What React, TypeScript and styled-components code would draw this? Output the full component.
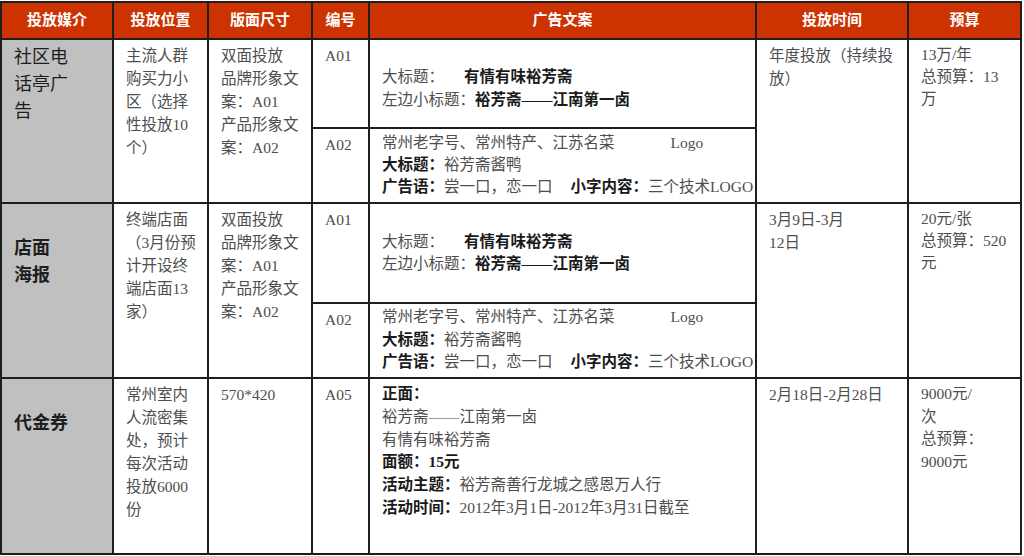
import React from 'react'
import styled, { createGlobalStyle } from 'styled-components'

const GlobalStyle = createGlobalStyle`
  html, body {
    margin: 0;
    padding: 0;
    background: #ffffff;
  }
  body {
    font-family: "Liberation Serif", "Noto Sans CJK SC", serif;
  }
`

const Page = styled.div`
  width: 1024px;
  height: 556px;
  padding-top: 1px;
  box-sizing: border-box;
  overflow: hidden;
`

const Table = styled.table`
  width: 1022px;
  table-layout: fixed;
  border-collapse: collapse;
  border: 2px solid #1e1e1e;
`

const Head = styled.th`
  height: 31px;
  padding: 0 0 4px;
  background: #cc3300;
  color: #ffffff;
  font-size: 15px;
  font-weight: 700;
  text-align: center;
  vertical-align: middle;
  border: 2px solid #1e1e1e;
`

const Media = styled.td<{ $top: number; $bold?: boolean }>`
  background: #c0c0c0;
  color: #1e1e1e;
  font-size: 18px;
  line-height: 27px;
  font-weight: ${(p) => (p.$bold ? 700 : 400)};
  padding: ${(p) => p.$top}px 8px 0 12px;
  vertical-align: top;
  border: 2px solid #1e1e1e;
`

const Cell = styled.td<{ $h?: number; $middle?: boolean; $pad?: number; $lh?: number }>`
  height: ${(p) => (p.$h ? `${p.$h}px` : 'auto')};
  color: #4e4e4e;
  font-size: 15.5px;
  line-height: ${(p) => p.$lh ?? 23}px;
  padding: ${(p) => p.$pad ?? 4}px 6px 0 12px;
  vertical-align: ${(p) => (p.$middle ? 'middle' : 'top')};
  border: 2px solid #1e1e1e;
  background: #ffffff;
  white-space: nowrap;
`

const Line = styled.div`
  display: block;
`

const B = styled.b`
  font-weight: 700;
  color: #1a1a1a;
`

const Gap = styled.span<{ $w: number }>`
  display: inline-block;
  width: ${(p) => p.$w}px;
`

const Lines = ({ items }: { items: string[] }) => (
  <>
    {items.map((t, i) => (
      <Line key={i}>{t}</Line>
    ))}
  </>
)

const headers = ['投放媒介', '投放位置', '版面尺寸', '编号', '广告文案', '投放时间', '预算']
const widths = [112, 95, 104, 57, 387, 152, 113]

const TitleCopy = () => (
  <>
    <Line>
      大标题：<Gap $w={20} />
      <B>有情有味裕芳斋</B>
    </Line>
    <Line>
      左边小标题：<B>裕芳斋——江南第一卤</B>
    </Line>
  </>
)

const ProductCopy = () => (
  <>
    <Line>
      常州老字号、常州特产、江苏名菜<Gap $w={56} />Logo
    </Line>
    <Line>
      <B>大标题：</B>裕芳斋酱鸭
    </Line>
    <Line>
      <B>广告语：</B>尝一口，恋一口<Gap $w={18} />
      <B>小字内容：</B>三个技术LOGO
    </Line>
  </>
)

const sizeLines = ['双面投放', '品牌形象文', '案：A01', '产品形象文', '案：A02']

export default function App() {
  return (
    <Page>
      <GlobalStyle />
      <Table>
        <colgroup>
          {widths.map((w, i) => (
            <col key={i} style={{ width: w }} />
          ))}
        </colgroup>
        <thead>
          <tr>
            {headers.map((h) => (
              <Head key={h}>{h}</Head>
            ))}
          </tr>
        </thead>
        <tbody>
          <tr>
            <Media rowSpan={2} $top={4}>
              <Lines items={['社区电', '话亭广', '告']} />
            </Media>
            <Cell rowSpan={2}>
              <Lines items={['主流人群', '购买力小', '区（选择', '性投放10', '个）']} />
            </Cell>
            <Cell rowSpan={2}>
              <Lines items={sizeLines} />
            </Cell>
            <Cell $h={83}>A01</Cell>
            <Cell $middle $pad={10} $lh={22.5}>
              <TitleCopy />
            </Cell>
            <Cell rowSpan={2}>
              <Lines items={['年度投放（持续投', '放）']} />
            </Cell>
            <Cell rowSpan={2} $lh={22}>
              <Lines items={['13万/年', '总预算：13', '万']} />
            </Cell>
          </tr>
          <tr>
            <Cell $h={69}>A02</Cell>
            <Cell $pad={3} $lh={22}>
              <ProductCopy />
            </Cell>
          </tr>
          <tr>
            <Media rowSpan={2} $top={31} $bold>
              <Lines items={['店面', '海报']} />
            </Media>
            <Cell rowSpan={2}>
              <Lines items={['终端店面', '（3月份预', '计开设终', '端店面13', '家）']} />
            </Cell>
            <Cell rowSpan={2}>
              <Lines items={sizeLines} />
            </Cell>
            <Cell $h={94}>A01</Cell>
            <Cell $middle $pad={0} $lh={22.5}>
              <TitleCopy />
            </Cell>
            <Cell rowSpan={2}>
              <Lines items={['3月9日-3月', '12日']} />
            </Cell>
            <Cell rowSpan={2} $lh={22}>
              <Lines items={['20元/张', '总预算：520', '元']} />
            </Cell>
          </tr>
          <tr>
            <Cell $h={69}>A02</Cell>
            <Cell $pad={2} $lh={22.5}>
              <ProductCopy />
            </Cell>
          </tr>
          <tr>
            <Media $top={31} $bold>
              代金券
            </Media>
            <Cell $h={170}>
              <Lines items={['常州室内', '人流密集', '处，预计', '每次活动', '投放6000', '份']} />
            </Cell>
            <Cell>570*420</Cell>
            <Cell>A05</Cell>
            <Cell $lh={22.8}>
              <Line>
                <B>正面：</B>
              </Line>
              <Line>裕芳斋——江南第一卤</Line>
              <Line>有情有味裕芳斋</Line>
              <Line>
                <B>面额：15元</B>
              </Line>
              <Line>
                <B>活动主题：</B>裕芳斋善行龙城之感恩万人行
              </Line>
              <Line>
                <B>活动时间：</B>2012年3月1日-2012年3月31日截至
              </Line>
            </Cell>
            <Cell>2月18日-2月28日</Cell>
            <Cell $lh={22.5}>
              <Lines items={['9000元/', '次', '总预算：', '9000元']} />
            </Cell>
          </tr>
        </tbody>
      </Table>
    </Page>
  )
}
